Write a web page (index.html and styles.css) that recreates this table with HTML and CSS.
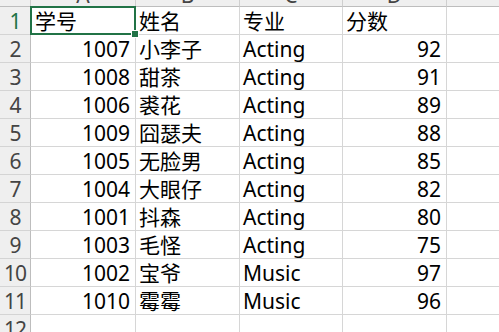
FILE: index.html
```html
<!DOCTYPE html>
<html lang="zh">
<head>
<meta charset="utf-8">
<link rel="stylesheet" href="styles.css">
</head>
<body>
<div class="sheet">
  <div class="corner hdr"></div>
  <div class="col hdr sel-col">A</div>
  <div class="col hdr">B</div>
  <div class="col hdr">C</div>
  <div class="col hdr">D</div>
  <div class="col hdr">E</div>

  <div class="row hdr sel-row">1</div>
  <div class="cell selected">学号</div><div class="cell">姓名</div><div class="cell">专业</div><div class="cell">分数</div><div class="cell"></div>

  <div class="row hdr">2</div>
  <div class="cell num">1007</div><div class="cell">小李子</div><div class="cell">Acting</div><div class="cell num">92</div><div class="cell"></div>

  <div class="row hdr">3</div>
  <div class="cell num">1008</div><div class="cell">甜茶</div><div class="cell">Acting</div><div class="cell num">91</div><div class="cell"></div>

  <div class="row hdr">4</div>
  <div class="cell num">1006</div><div class="cell">裘花</div><div class="cell">Acting</div><div class="cell num">89</div><div class="cell"></div>

  <div class="row hdr">5</div>
  <div class="cell num">1009</div><div class="cell">囧瑟夫</div><div class="cell">Acting</div><div class="cell num">88</div><div class="cell"></div>

  <div class="row hdr">6</div>
  <div class="cell num">1005</div><div class="cell">无脸男</div><div class="cell">Acting</div><div class="cell num">85</div><div class="cell"></div>

  <div class="row hdr">7</div>
  <div class="cell num">1004</div><div class="cell">大眼仔</div><div class="cell">Acting</div><div class="cell num">82</div><div class="cell"></div>

  <div class="row hdr">8</div>
  <div class="cell num">1001</div><div class="cell">抖森</div><div class="cell">Acting</div><div class="cell num">80</div><div class="cell"></div>

  <div class="row hdr">9</div>
  <div class="cell num">1003</div><div class="cell">毛怪</div><div class="cell">Acting</div><div class="cell num">75</div><div class="cell"></div>

  <div class="row hdr">10</div>
  <div class="cell num">1002</div><div class="cell">宝爷</div><div class="cell">Music</div><div class="cell num">97</div><div class="cell"></div>

  <div class="row hdr">11</div>
  <div class="cell num">1010</div><div class="cell">霉霉</div><div class="cell">Music</div><div class="cell num">96</div><div class="cell"></div>

  <div class="row hdr">12</div>
  <div class="cell"></div><div class="cell"></div><div class="cell"></div><div class="cell"></div><div class="cell"></div>
</div>
</body>
</html>
```

FILE: styles.css
```css
html, body {
  margin: 0;
  padding: 0;
  background: #ffffff;
  overflow: hidden;
}

body {
  width: 499px;
  height: 332px;
  font-family: "Noto Sans", "Noto Sans CJK SC", sans-serif;
  font-size: 21px;
  color: #000000;
}

.sheet {
  display: grid;
  grid-template-columns: 31px 105px 104px 103px 104px 120px;
  grid-auto-rows: 28px;
  margin-top: -21px;
}

.hdr {
  background: #efefef;
  color: #444444;
  box-sizing: border-box;
  overflow: hidden;
}

.corner,
.col {
  border-right: 1px solid #cfcfcf;
  border-bottom: 1px solid #bdbdbd;
  text-align: center;
  line-height: 32px;
}

.row {
  border-right: 1px solid #bdbdbd;
  border-bottom: 1px solid #d4d4d4;
  text-align: center;
  line-height: 28px;
  letter-spacing: -1px;
}

.sel-row {
  color: #217346;
}

.cell {
  box-sizing: border-box;
  border-right: 1px solid #d6d6d6;
  border-bottom: 1px solid #d6d6d6;
  padding: 0 4px 0 3px;
  line-height: 28px;
  white-space: nowrap;
  overflow: hidden;
}

.num {
  text-align: right;
  padding-right: 5px;
}

.selected {
  position: relative;
  overflow: visible;
  padding-left: 4px;
}

.selected::before {
  content: "";
  position: absolute;
  left: -1px;
  top: -1px;
  right: -1px;
  bottom: -1px;
  border: 2px solid #217346;
}

.selected::after {
  content: "";
  position: absolute;
  right: -4px;
  bottom: -4px;
  width: 6px;
  height: 6px;
  background: #217346;
  border: 1px solid #ffffff;
}
```
